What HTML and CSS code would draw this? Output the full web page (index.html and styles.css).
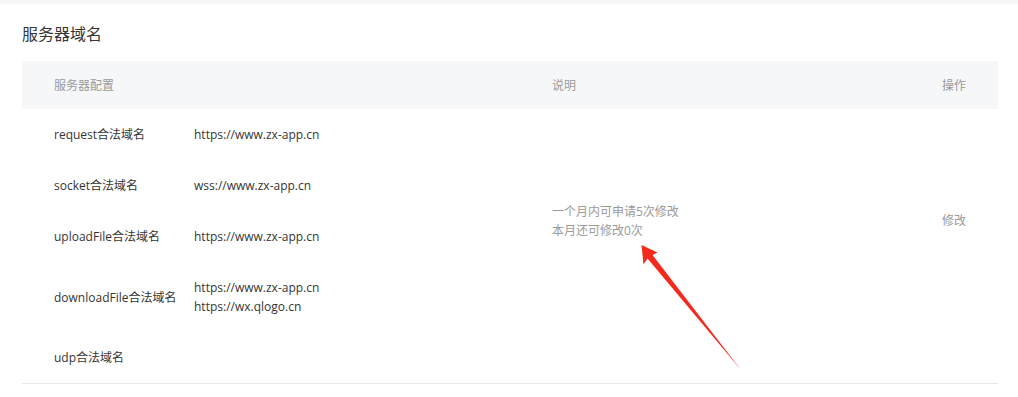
FILE: index.html
```html
<!DOCTYPE html>
<html lang="zh-CN">
<head>
<meta charset="utf-8">
<title>服务器域名</title>
<link rel="stylesheet" href="styles.css">
</head>
<body>
<div class="panel">
  <h2 class="title">服务器域名</h2>
  <div class="table">
    <div class="thead">
      <div class="th">服务器配置</div>
      <div class="th">说明</div>
      <div class="th">操作</div>
    </div>
    <div class="tbody">
      <div class="cfg r1"><span class="label">request合法域名</span><span class="urls"><span>https://www.zx-app.cn</span></span></div>
      <div class="cfg r2"><span class="label">socket合法域名</span><span class="urls"><span>wss://www.zx-app.cn</span></span></div>
      <div class="cfg r3"><span class="label">uploadFile合法域名</span><span class="urls"><span>https://www.zx-app.cn</span></span></div>
      <div class="cfg r4"><span class="label">downloadFile合法域名</span><span class="urls"><span>https://www.zx-app.cn</span><span>https://wx.qlogo.cn</span></span></div>
      <div class="cfg r5"><span class="label">udp合法域名</span><span class="urls"></span></div>
      <div class="desc"><span>一个月内可申请5次修改</span><span>本月还可修改0次</span></div>
      <div class="action">修改</div>
    </div>
  </div>
</div>
<svg class="arrow" viewBox="0 0 1018 397" width="1018" height="397" aria-hidden="true">
  <polygon points="641.5,245 657.5,252.5 652.5,255 741,370 647.5,258.5 643.5,264.5" fill="#f52a1e"/>
</svg>
</body>
</html>
```
FILE: styles.css
```css
* { box-sizing: border-box; }
html, body { margin: 0; padding: 0; }
body {
  background: #f6f7f9;
  font-family: "Open Sans", "Noto Sans CJK SC", sans-serif;
  font-size: 12px;
  color: #353535;
  position: relative;
  width: 1018px;
  height: 397px;
  overflow: hidden;
}
.panel {
  margin-top: 4px;
  background: #fff;
  padding: 18px 20px 20px 22px;
  min-height: 393px;
}
.title {
  margin: 0 0 15px 0;
  font-size: 16px;
  font-weight: normal;
  line-height: 24px;
  color: #353535;
}
.thead {
  display: grid;
  grid-template-columns: 498px 390px 1fr;
  background: #f6f7f9;
  height: 48px;
  align-items: center;
}
.th {
  padding-left: 32px;
  color: #9a9a9a;
  line-height: 19px;
}
.tbody {
  display: grid;
  grid-template-columns: 498px 390px 1fr;
  border-bottom: 1px solid #e7e7eb;
}
.cfg {
  grid-column: 1;
  display: flex;
  align-items: center;
  padding: 16px 0 16px 32px;
  line-height: 19px;
}
.r1 { grid-row: 1; }
.r2 { grid-row: 2; }
.r3 { grid-row: 3; }
.r4 { grid-row: 4; }
.r5 { grid-row: 5; }
.label { width: 140px; flex: none; }
.urls { display: flex; flex-direction: column; }
.desc {
  grid-column: 2;
  grid-row: 1 / span 4;
  align-self: center;
  padding-left: 32px;
  display: flex;
  flex-direction: column;
  color: #9a9a9a;
  line-height: 19px;
}
.action {
  grid-column: 3;
  grid-row: 1 / span 4;
  align-self: center;
  padding-left: 32px;
  color: #9a9a9a;
  line-height: 19px;
}
.arrow {
  position: absolute;
  left: 0;
  top: 0;
  pointer-events: none;
}
```
